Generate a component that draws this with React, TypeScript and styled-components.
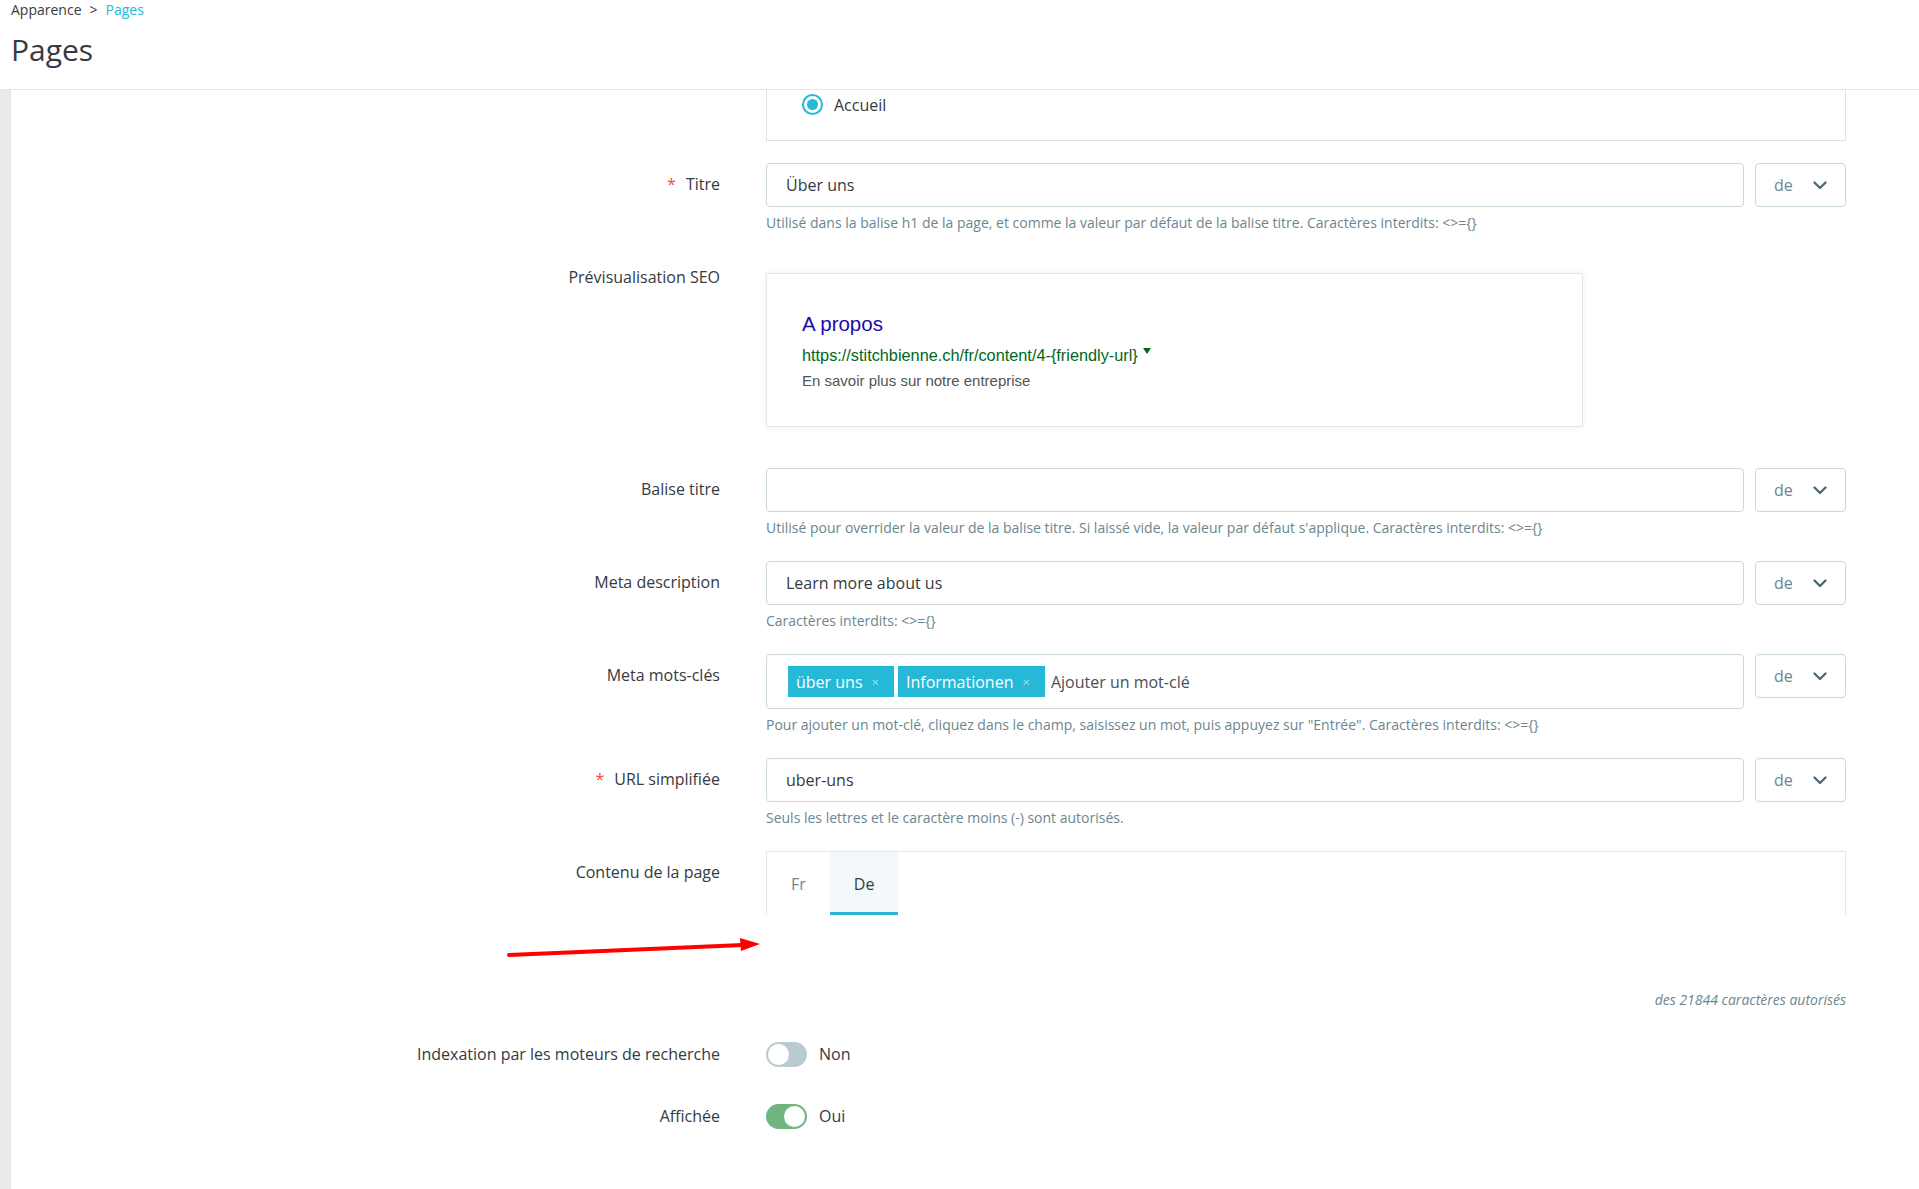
import React from "react";
import styled, {createGlobalStyle} from "styled-components";

const GlobalStyle = createGlobalStyle`
    html, body {
        margin: 0;
        padding: 0;
        background: #fff;
    }

    body {
        font-family: "Open Sans", "Noto Sans", sans-serif;
        color: #363a41;
    }

    * {
        box-sizing: border-box;
    }
`;

const Page = styled.div`
    position: relative;
    min-height: 100vh;
    background: #fff;
`;

const Header = styled.header`
    height: 90px;
    padding: 0 11px;
    background: #fff;
    border-bottom: 1px solid #dfe5e8;
`;

const Breadcrumb = styled.nav`
    display: flex;
    gap: 8px;
    font-size: 14px;
    line-height: 19px;
`;

const Crumb = styled.span<{ $active?: boolean }>`
    color: ${p => p.$active ? "#25b9d7" : "#363a41"};
`;

const Title = styled.h1`
    margin: 11px 0 0;
    font-size: 30px;
    font-weight: 400;
    line-height: 40px;
    color: #363a41;
`;

const Body = styled.div`
    display: flex;
    min-height: calc(100vh - 90px);
`;

const SideStrip = styled.div`
    flex: none;
    width: 11px;
    background: #e8eaec;
    border-right: 1px solid #dde2e5;
`;

const Main = styled.main`
    flex: 1;
`;

const Row = styled.div<{ $mb?: number }>`
    display: grid;
    grid-template-columns: 709px 1080px;
    column-gap: 46px;
    margin-bottom: ${p => p.$mb ?? 24}px;
`;

const Label = styled.label`
    text-align: right;
    font-size: 16px;
    line-height: 42px;
    color: #363a41;
`;

const Req = styled.span`
    color: #f54c3e;
    margin-right: 10px;
`;

const Field = styled.div<{ $center?: boolean }>`
    min-width: 0;
    display: ${p => p.$center ? "flex" : "block"};
    align-items: center;
`;

const TreeBox = styled.div`
    height: 51px;
    border: 1px solid #dbe3e6;
    border-top: none;
    padding: 4px 0 0 35px;
`;

const RadioRow = styled.div`
    display: flex;
    align-items: center;
    gap: 11px;
    height: 21px;
    font-size: 16px;
`;

const Radio = styled.span`
    width: 21px;
    height: 21px;
    border-radius: 50%;
    border: 2.5px solid #25b9d7;
    display: grid;
    place-items: center;

    &::after {
        content: "";
        width: 11px;
        height: 11px;
        border-radius: 50%;
        background: #25b9d7;
    }
`;

const InputLine = styled.div`
    display: flex;
    gap: 11px;
`;

const TextBox = styled.div<{ $tall?: boolean }>`
    flex: 1;
    height: ${p => p.$tall ? 55 : 44}px;
    border: 1px solid #c9d7dc;
    border-radius: 4px;
    padding: 0 19px;
    display: flex;
    align-items: center;
    font-size: 16px;
    color: #363a41;
`;

const TagsBox = styled(TextBox)`
    padding: 0 21px;
    gap: 4px;
`;

const Tag = styled.span`
    height: 31px;
    display: flex;
    align-items: center;
    padding: 0 15px 0 8px;
    background: #25b9d7;
    color: #fff;
    font-size: 16px;
`;

const TagX = styled.span`
    margin-left: 9px;
    font-size: 13px;
    color: rgba(255, 255, 255, 0.6);
`;

const Placeholder = styled.span`
    margin-left: 2px;
    color: #4a4f55;
`;

const LangSelect = styled.div`
    flex: none;
    width: 91px;
    height: 44px;
    border: 1px solid #c9d7dc;
    border-radius: 4px;
    padding: 0 18px;
    display: flex;
    align-items: center;
    justify-content: space-between;
    font-size: 16px;
    color: #6c868e;
`;

const Help = styled.div`
    margin-top: 7px;
    font-size: 14px;
    line-height: 18px;
    color: #6c868e;
`;

const SeoCard = styled.div`
    margin-top: 17px;
    width: 817px;
    height: 154px;
    padding: 37px 35px;
    border: 1px solid #e6e6e6;
    border-radius: 2px;
    box-shadow: 0 0 4px rgba(0, 0, 0, 0.08);
    font-family: "Liberation Sans", Arial, sans-serif;
`;

const SeoTitle = styled.div`
    font-size: 20.5px;
    line-height: 26px;
    color: #1a0dab;
`;

const SeoUrl = styled.div`
    margin-top: 8px;
    font-size: 16.3px;
    line-height: 20px;
    color: #006621;
    display: flex;
    align-items: flex-start;
`;

const Caret = styled.span`
    margin-left: 5px;
    margin-top: 3px;
    border-left: 4px solid transparent;
    border-right: 4px solid transparent;
    border-top: 6px solid #006621;
`;

const SeoDesc = styled.div`
    margin-top: 6px;
    font-size: 15px;
    line-height: 20px;
    color: #545454;
`;

const Tabs = styled.div`
    display: flex;
    height: 64px;
    border: 1px solid #e3e6e8;
    border-bottom: none;
`;

const Tab = styled.div<{ $active?: boolean }>`
    padding: 3px 24px 0;
    display: flex;
    align-items: center;
    font-size: 16px;
    color: ${p => p.$active ? "#363a41" : "#6c868e"};
    background: ${p => p.$active ? "#f3f8fa" : "transparent"};
    border-bottom: 3px solid ${p => p.$active ? "#25b9d7" : "transparent"};
`;

const EditorSpace = styled.div`
    height: 76px;
`;

const Counter = styled.div`
    text-align: right;
    font-size: 14px;
    line-height: 18px;
    font-style: italic;
    color: #6c868e;
`;

const Switch = styled.span<{ $on?: boolean }>`
    position: relative;
    width: 41px;
    height: 25px;
    border-radius: 13px;
    background: ${p => p.$on ? "#70b580" : "#b9cbd1"};

    &::after {
        content: "";
        position: absolute;
        top: 2px;
        left: ${p => p.$on ? "18px" : "2px"};
        width: 21px;
        height: 21px;
        border-radius: 50%;
        background: #fff;
    }
`;

const SwitchText = styled.span`
    margin-left: 12px;
    font-size: 16px;
    color: #363a41;
`;

const Arrow = styled.svg`
    position: absolute;
    left: 500px;
    top: 930px;
`;

const Chevron = () => (
    <svg width="14" height="9" viewBox="0 0 14 9">
        <path d="M1.5 1.5 L7 7 L12.5 1.5" fill="none" stroke="#4f6a74" strokeWidth="2.4" strokeLinecap="round"
              strokeLinejoin="round"/>
    </svg>
);

const LangInput = ({value}: { value?: string }) => (
    <InputLine>
        <TextBox>{value}</TextBox>
        <LangSelect>de<Chevron/></LangSelect>
    </InputLine>
);

export default function App() {
    return (
        <Page>
            <GlobalStyle/>
            <Header>
                <Breadcrumb>
                    <Crumb>Apparence</Crumb>
                    <Crumb>&gt;</Crumb>
                    <Crumb $active>Pages</Crumb>
                </Breadcrumb>
                <Title>Pages</Title>
            </Header>
            <Body>
                <SideStrip/>
                <Main>
                    <Row $mb={22}>
                        <div/>
                        <Field>
                            <TreeBox>
                                <RadioRow><Radio/>Accueil</RadioRow>
                            </TreeBox>
                        </Field>
                    </Row>

                    <Row>
                        <Label><Req>*</Req>Titre</Label>
                        <Field>
                            <LangInput value="Über uns"/>
                            <Help>Utilisé dans la balise h1 de la page, et comme la valeur par défaut de la balise titre. Caractères interdits: &lt;&gt;={"{}"}</Help>
                        </Field>
                    </Row>

                    <Row $mb={41}>
                        <Label>Prévisualisation SEO</Label>
                        <Field>
                            <SeoCard>
                                <SeoTitle>A propos</SeoTitle>
                                <SeoUrl>https://stitchbienne.ch/fr/content/4-{"{friendly-url}"}<Caret/></SeoUrl>
                                <SeoDesc>En savoir plus sur notre entreprise</SeoDesc>
                            </SeoCard>
                        </Field>
                    </Row>

                    <Row>
                        <Label>Balise titre</Label>
                        <Field>
                            <LangInput/>
                            <Help>Utilisé pour overrider la valeur de la balise titre. Si laissé vide, la valeur par défaut s'applique. Caractères interdits: &lt;&gt;={"{}"}</Help>
                        </Field>
                    </Row>

                    <Row>
                        <Label>Meta description</Label>
                        <Field>
                            <LangInput value="Learn more about us"/>
                            <Help>Caractères interdits: &lt;&gt;={"{}"}</Help>
                        </Field>
                    </Row>

                    <Row>
                        <Label>Meta mots-clés</Label>
                        <Field>
                            <InputLine>
                                <TagsBox $tall>
                                    <Tag>über uns<TagX>×</TagX></Tag>
                                    <Tag>Informationen<TagX>×</TagX></Tag>
                                    <Placeholder>Ajouter un mot-clé</Placeholder>
                                </TagsBox>
                                <LangSelect>de<Chevron/></LangSelect>
                            </InputLine>
                            <Help>Pour ajouter un mot-clé, cliquez dans le champ, saisissez un mot, puis appuyez sur "Entrée". Caractères interdits: &lt;&gt;={"{}"}</Help>
                        </Field>
                    </Row>

                    <Row>
                        <Label><Req>*</Req>URL simplifiée</Label>
                        <Field>
                            <LangInput value="uber-uns"/>
                            <Help>Seuls les lettres et le caractère moins (-) sont autorisés.</Help>
                        </Field>
                    </Row>

                    <Row>
                        <Label>Contenu de la page</Label>
                        <Field>
                            <Tabs>
                                <Tab>Fr</Tab>
                                <Tab $active>De</Tab>
                            </Tabs>
                            <EditorSpace/>
                            <Counter>des 21844 caractères autorisés</Counter>
                        </Field>
                    </Row>

                    <Row $mb={20}>
                        <Label>Indexation par les moteurs de recherche</Label>
                        <Field $center>
                            <Switch/>
                            <SwitchText>Non</SwitchText>
                        </Field>
                    </Row>

                    <Row>
                        <Label>Affichée</Label>
                        <Field $center>
                            <Switch $on/>
                            <SwitchText>Oui</SwitchText>
                        </Field>
                    </Row>
                </Main>
            </Body>

            <Arrow width="270" height="35" viewBox="0 0 270 35">
                <line x1="9" y1="25" x2="243" y2="15" stroke="#ff0000" strokeWidth="4" strokeLinecap="round"/>
                <polygon points="240,8 260,14 241,21" fill="#ff0000"/>
            </Arrow>
        </Page>
    );
}
